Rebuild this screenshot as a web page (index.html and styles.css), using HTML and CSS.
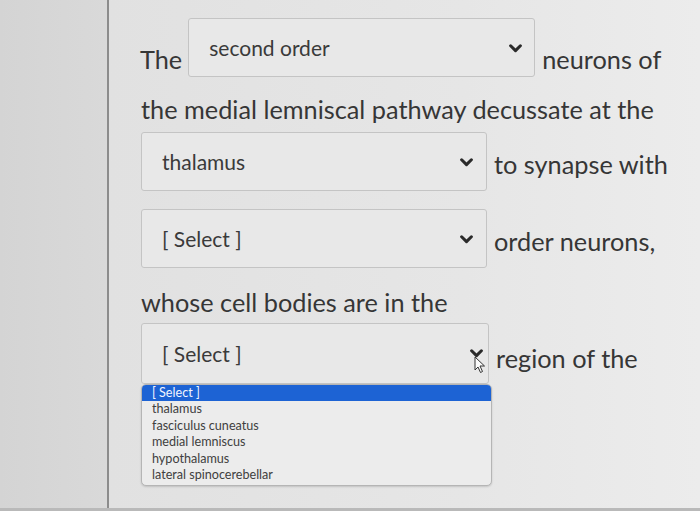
FILE: index.html
```html
<!DOCTYPE html>
<html>
<head>
<meta charset="utf-8">
<link rel="stylesheet" href="styles.css">
</head>
<body>
<div class="page">
  <div class="side"></div>
  <div class="content">
    <div class="row r1">
      <span class="txt t-the">The</span>
      <div class="sel s1"><span class="val">second order</span><svg class="chev" viewBox="0 0 12 8"><path d="M1.5 1.5 L6 6 L10.5 1.5" /></svg></div>
      <span class="txt">neurons of</span>
    </div>
    <div class="row r2"><span class="txt">the medial lemniscal pathway decussate at the</span></div>
    <div class="row r3">
      <div class="sel s2"><span class="val">thalamus</span><svg class="chev" viewBox="0 0 12 8"><path d="M1.5 1.5 L6 6 L10.5 1.5" /></svg></div>
      <span class="txt">to synapse with</span>
    </div>
    <div class="row r4">
      <div class="sel s2"><span class="val">[ Select ]</span><svg class="chev" viewBox="0 0 12 8"><path d="M1.5 1.5 L6 6 L10.5 1.5" /></svg></div>
      <span class="txt">order neurons,</span>
    </div>
    <div class="row r5"><span class="txt">whose cell bodies are in the</span></div>
    <div class="row r6">
      <div class="selwrap">
        <div class="sel s3"><span class="val">[ Select ]</span><svg class="chev" viewBox="0 0 12 8"><path d="M1.5 1.5 L6 6 L10.5 1.5" /></svg>
          <svg class="cursor" viewBox="0 0 12 18"><path d="M1 1 L1 14 L4 11 L6.5 16.5 L8.5 15.5 L6 10 L10.5 10 Z" /></svg>
        </div>
        <ul class="list">
          <li class="hl">[ Select ]</li>
          <li>thalamus</li>
          <li>fasciculus cuneatus</li>
          <li>medial lemniscus</li>
          <li>hypothalamus</li>
          <li>lateral spinocerebellar</li>
        </ul>
      </div>
      <span class="txt">region of the</span>
    </div>
  </div>
</div>
</body>
</html>
```
FILE: styles.css
```css
html, body {
  margin: 0;
  padding: 0;
}
body {
  width: 700px;
  height: 511px;
  overflow: hidden;
  font-family: Lato, "Open Sans", sans-serif;
  color: #363636;
  background: #e6e6e6;
}
.page {
  display: flex;
  height: 508px;
  border-bottom: 3px solid #b9b9b9;
}
.side {
  width: 107px;
  flex: none;
  background: linear-gradient(90deg, #d4d4d4, #d9d9d9);
  border-right: 2px solid #8c8c8c;
}
.content {
  flex: 1;
  padding: 18px 0 0 32px;
  background: linear-gradient(90deg, #e1e1e1 0%, #e6e6e6 60%, #ececec 100%);
}
.row {
  display: flex;
  align-items: flex-start;
}
.txt {
  font-size: 25.3px;
  line-height: 30px;
  white-space: nowrap;
}
.r1 .txt {
  margin-top: 26px;
}
.r1 .t-the {
  margin-left: -1px;
  margin-right: 6px;
}
.sel {
  position: relative;
  box-sizing: border-box;
  height: 59px;
  border: 1px solid #c4c4c4;
  border-radius: 3px;
  background: #e8e8e8;
  display: flex;
  align-items: flex-start;
  justify-content: space-between;
  margin-right: 7px;
}
.val {
  font-size: 21px;
  line-height: 26px;
  padding-top: 16px;
  padding-left: 20px;
  color: #3a3a3a;
}
.s1 {
  width: 347px;
}
.s1 .val {
  padding-top: 16px;
}
.chev {
  width: 13px;
  height: 9px;
  margin-top: 25px;
  margin-right: 13px;
  fill: none;
  stroke: #2a2a2a;
  stroke-width: 2.8;
  stroke-linecap: round;
  stroke-linejoin: round;
}
.s1 .chev {
  margin-right: 12px;
}
.r2 {
  margin-top: 17px;
}
.r3 {
  margin-top: 8px;
}
.r3 .txt, .r4 .txt {
  margin-top: 17px;
}
.s2 {
  width: 346px;
  height: 59px;
}
.r4 {
  margin-top: 18px;
}
.r5 {
  margin-top: 19px;
}
.r6 {
  margin-top: 6px;
}
.r6 .txt {
  margin-top: 20px;
}
.selwrap {
  position: relative;
  width: 348px;
  margin-right: 7px;
}
.s3 {
  width: 348px;
  height: 61px;
  margin-right: 0;
}
.s3 .val {
  padding-top: 17px;
}
.s3 .chev {
  margin-top: 25px;
  margin-right: 5px;
}
.cursor {
  position: absolute;
  left: 332px;
  top: 32px;
  width: 12px;
  height: 18px;
  fill: #fafafa;
  stroke: #333;
  stroke-width: 1;
}
.list {
  position: absolute;
  left: 0;
  top: 61px;
  width: 351px;
  box-sizing: border-box;
  margin: 0;
  padding: 0 0 2px;
  list-style: none;
  background: #ececec;
  border: 1px solid #b5b5b5;
  border-radius: 5px;
  box-shadow: 0 1px 2px rgba(0,0,0,0.15);
  font-size: 12.6px;
  line-height: 16.4px;
  color: #404040;
}
.list li {
  padding-left: 10px;
}
.list .hl {
  background: #1d63d4;
  color: #f2f6ff;
  border-radius: 4px 4px 0 0;
}
```
